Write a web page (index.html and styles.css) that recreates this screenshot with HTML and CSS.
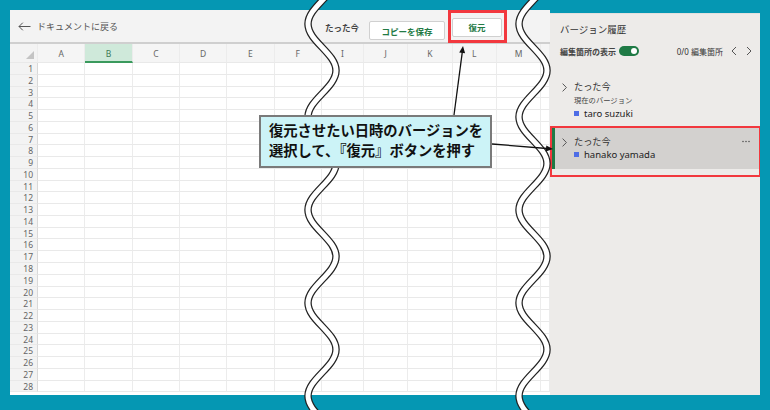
FILE: index.html
```html
<!DOCTYPE html>
<html lang="ja">
<head>
    <meta charset="UTF-8">
    <title>バージョン履歴</title>
    <link rel="stylesheet" href="styles.css">
</head>
<body>
<div class="app">
    <div class="main">
        <div class="topbar">
            <a class="back">
                <svg width="13" height="9" viewBox="0 0 13 9"><path d="M12.5 4.5H1M4.8 0.7L1 4.5l3.8 3.8" fill="none" stroke="#555" stroke-width="1"/></svg>
                ドキュメントに戻る
            </a>
            <div class="actions">
                <span class="stamp">たった今</span>
                <button class="btn btn-copy">コピーを保存</button>
                <span class="mark mark-btn"><button class="btn btn-restore">復元</button></span>
            </div>
        </div>
        <div class="sheet" id="sheet"></div>
    </div>

    <aside class="panel">
        <h2 class="panel-title">バージョン履歴</h2>
        <div class="panel-tools">
            <span class="tool-label">編集箇所の表示</span>
            <span class="toggle"></span>
            <span class="count">0/0 編集箇所</span>
            <svg class="nav" width="6" height="10" viewBox="0 0 6 10"><path d="M5 1L1 5l4 4" fill="none" stroke="#555" stroke-width="1"/></svg>
            <svg class="nav" width="6" height="10" viewBox="0 0 6 10"><path d="M1 1l4 4-4 4" fill="none" stroke="#555" stroke-width="1"/></svg>
        </div>

        <div class="version">
            <svg class="chev" width="5" height="9" viewBox="0 0 5 9"><path d="M0.6 0.6l3.8 3.9-3.8 3.9" fill="none" stroke="#555" stroke-width="1"/></svg>
            <div class="version-body">
                <div class="when">たった今</div>
                <div class="note">現在のバージョン</div>
                <div class="author"><span class="dot"></span>taro suzuki</div>
            </div>
        </div>

        <div class="mark mark-version">
            <div class="version selected">
                <svg class="chev" width="5" height="9" viewBox="0 0 5 9"><path d="M0.6 0.6l3.8 3.9-3.8 3.9" fill="none" stroke="#555" stroke-width="1"/></svg>
                <div class="version-body">
                    <div class="when">たった今</div>
                    <div class="author"><span class="dot"></span>hanako yamada</div>
                </div>
                <svg class="more" width="8" height="3" viewBox="0 0 8 3"><circle cx="1" cy="1.5" r="0.8" fill="#555"/><circle cx="4" cy="1.5" r="0.8" fill="#555"/><circle cx="7" cy="1.5" r="0.8" fill="#555"/></svg>
            </div>
        </div>
    </aside>
</div>

<svg class="overlay" width="770" height="410" viewBox="0 0 770 410">
    <defs>
        <g id="wave">
            <path d="M336,-22.5 C336,-5.5 308,7 308,24 S336,53.5 336,70.5 S308,100 308,117 S336,146.5 336,163.5 S308,193 308,210 S336,239.5 336,256.5 S308,286 308,303 S336,332.5 336,349.5 S308,379 308,396 S336,425.5 336,442.5" fill="none" stroke="#222" stroke-width="7.5"/>
            <path d="M336,-22.5 C336,-5.5 308,7 308,24 S336,53.5 336,70.5 S308,100 308,117 S336,146.5 336,163.5 S308,193 308,210 S336,239.5 336,256.5 S308,286 308,303 S336,332.5 336,349.5 S308,379 308,396 S336,425.5 336,442.5" fill="none" stroke="#fff" stroke-width="5"/>
        </g>
    </defs>
    <use href="#wave"/>
    <use href="#wave" transform="translate(211 0)"/>
    <line x1="454" y1="115" x2="462.3" y2="52" stroke="#111" stroke-width="1.3"/>
    <polygon points="463,46 465.1,53.3 459.2,52.6" fill="#111"/>
    <line x1="492" y1="144" x2="547" y2="148.5" stroke="#111" stroke-width="1.3"/>
    <polygon points="553,149 545.8,151.6 546.3,145.4" fill="#111"/>
</svg>

<div class="callout">
    復元させたい日時のバージョンを<br>
    選択して、『復元』ボタンを押す
</div>

<script>
    const cols = ['', 'A', 'B', 'C', 'D', 'E', 'F', 'I', 'J', 'K', 'L', 'M', ''];
    const sheet = document.getElementById('sheet');

    cols.forEach((name, i) => {
        const cell = document.createElement('div');
        if (i === 0) {
            cell.className = 'corner';
        } else {
            cell.className = name === 'B' ? 'col-head active' : 'col-head';
            cell.textContent = name;
        }
        sheet.appendChild(cell);
    });

    for (let r = 1; r <= 28; r++) {
        const num = document.createElement('div');
        num.className = 'row-head';
        num.textContent = r;
        sheet.appendChild(num);
        for (let c = 1; c < cols.length; c++) {
            const cell = document.createElement('div');
            cell.className = 'cell';
            sheet.appendChild(cell);
        }
    }
</script>
</body>
</html>
```

FILE: styles.css
```css
body {
    margin: 0;
    width: 770px;
    height: 410px;
    background: #0597b3;
    font-family: "Noto Sans", "Noto Sans CJK JP", sans-serif;
    color: #333;
    position: relative;
    overflow: hidden;
}

.app {
    display: flex;
    margin: 10px 10px 0 10px;
    height: 385px;
}

.main {
    width: 540px;
    display: flex;
    flex-direction: column;
    background: #fff;
    overflow: hidden;
}

.topbar {
    height: 32px;
    flex: none;
    display: flex;
    align-items: center;
    justify-content: space-between;
    background: #f3f3f3;
    border-bottom: 2px solid #cfcfcf;
    padding: 0 43px 0 8px;
}

.back {
    display: flex;
    align-items: center;
    gap: 6px;
    font-size: 9px;
    color: #555;
}

.actions {
    display: flex;
    align-items: center;
    align-self: flex-start;
}

.stamp {
    font-size: 8.5px;
    font-weight: bold;
    color: #444;
    margin-right: 10px;
    margin-top: 1px;
}

.btn {
    height: 19px;
    padding: 0;
    background: #fff;
    border: 1px solid #d0d0d0;
    border-radius: 2px;
    font-family: inherit;
    font-size: 8.5px;
    font-weight: bold;
    color: #237a45;
}

.btn-copy {
    width: 76px;
    margin-top: 8px;
    margin-right: 3px;
}

.btn-restore {
    width: 50px;
}

.mark {
    border: 3px solid #f2383e;
    box-sizing: border-box;
}

.mark-btn {
    height: 33px;
    display: flex;
    align-items: center;
    padding: 1px 2px 0 1px;
}

/* sheet */

.sheet {
    display: grid;
    grid-template-columns: 28px repeat(6, 47.33px) 42px repeat(4, 44.3px) 1fr;
    grid-template-rows: 19px repeat(28, 11.78px);
    font-size: 8.5px;
    color: #666;
}

.sheet > div {
    box-sizing: border-box;
    border-right: 1px solid #ececec;
    border-bottom: 1px solid #e9e9e9;
}

.corner {
    background: #f3f3f3;
    position: relative;
}

.corner::after {
    content: "";
    position: absolute;
    right: 3px;
    bottom: 3px;
    width: 8px;
    height: 8px;
    background: #c4c4c4;
    clip-path: polygon(100% 0, 100% 100%, 0 100%);
}

.col-head {
    background: #f5f5f5;
    text-align: center;
    line-height: 19px;
}

.sheet > .col-head.active {
    background: #cfe9da;
    color: #3d7b54;
    border-bottom: 2px solid #3a9a5d;
}

.sheet > .row-head {
    background: #f3f3f3;
    text-align: right;
    padding-right: 4px;
    line-height: 11.78px;
    border-right: 1px solid #d9d9d9;
}

/* version panel */

.panel {
    width: 210px;
    margin-top: 3px;
    background: #edebe9;
    border-top: 1px solid #e2e0de;
}

.panel-title {
    margin: 8px 0 0 10px;
    font-size: 9.5px;
    font-weight: normal;
    line-height: 16px;
    color: #333;
}

.panel-tools {
    display: flex;
    align-items: center;
    margin: 6px 8px 0 10px;
    height: 14px;
    font-size: 8px;
    color: #333;
}

.tool-label {
    font-weight: bold;
    color: #444;
}

.toggle {
    position: relative;
    width: 20px;
    height: 10px;
    margin-left: 3px;
    border-radius: 5px;
    background: #1f7a45;
}

.toggle::after {
    content: "";
    position: absolute;
    right: 2px;
    top: 2px;
    width: 6px;
    height: 6px;
    border-radius: 50%;
    background: #fff;
}

.count {
    margin-left: auto;
    margin-right: 8px;
}

.nav + .nav {
    margin-left: 9px;
}

.version {
    display: flex;
    align-items: flex-start;
    padding: 7px 0 4px 12px;
    margin-top: 16px;
}

.chev {
    margin-top: 2px;
    margin-right: 7px;
    flex: none;
}

.version-body {
    flex: 1;
}

.when {
    font-size: 9.2px;
    line-height: 12px;
    color: #333;
}

.note {
    font-size: 7.3px;
    line-height: 14px;
    color: #444;
}

.author {
    display: flex;
    align-items: center;
    font-size: 9.5px;
    line-height: 13px;
    color: #222;
}

.dot {
    width: 5px;
    height: 5px;
    background: #4e6de6;
    margin-right: 5px;
}

.mark-version {
    margin-top: 2px;
    border-width: 2px 1px 2px 2px;
    padding-bottom: 6px;
}

.version.selected {
    margin-top: 0;
    padding: 8px 0 8px 7px;
    border-left: 3px solid #1f7a45;
    background: #d3d1cf;
}

.more {
    flex: none;
    margin: 4px 9px 0 0;
}

/* annotations */

.overlay {
    position: absolute;
    left: 0;
    top: 0;
}

.callout {
    position: absolute;
    left: 259px;
    top: 115px;
    width: 233px;
    height: 53px;
    box-sizing: border-box;
    padding: 4px 0 0 8px;
    background: #ccf3f7;
    border: 2px solid #7a7a7a;
    font-size: 14.3px;
    font-weight: bold;
    line-height: 20px;
    color: #111;
    white-space: nowrap;
}
```
